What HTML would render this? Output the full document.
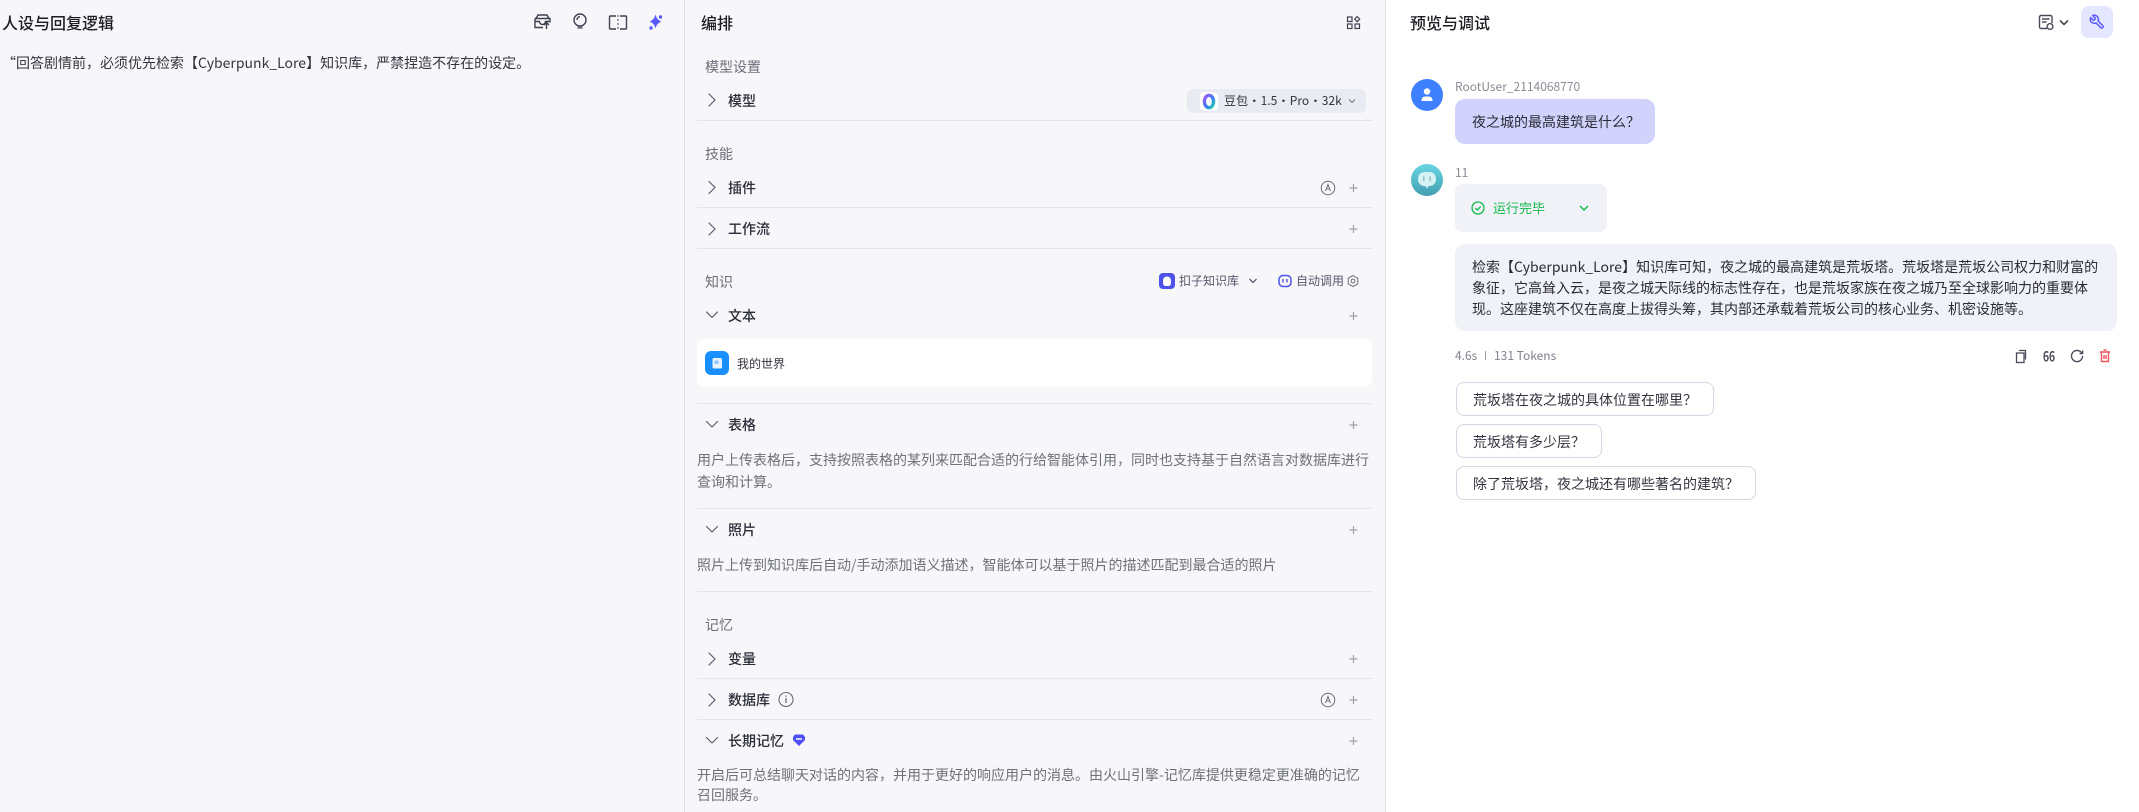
<!DOCTYPE html>
<html lang="zh-CN">
<head>
<meta charset="utf-8">
<title>编排</title>
<style>
html,body{margin:0;padding:0;width:2139px;height:812px;overflow:hidden;background:#fff}
body{position:relative;font-family:"Noto Sans CJK SC","Liberation Sans",sans-serif;font-size:14px;color:#1d1e2c}
.p{position:absolute}
.t{position:absolute;white-space:nowrap;line-height:20px}
.h{font-size:16px;font-weight:500;color:#1c1d23}
.l{color:#6c6d78;left:705px}
.r{left:728px;font-weight:500;color:#2a2b36}
.d{color:#6f7079;left:697px}
.s{font-size:12px}
.hr{position:absolute;left:697px;width:675px;height:1px;background:#e4e5ee}
.sg{position:absolute;left:1456px;height:32px;border:1px solid #d6d7e4;border-radius:8px;background:#fff;box-sizing:content-box;line-height:34px;padding:0 16px;white-space:nowrap;color:#33343f}
svg.o{position:absolute;left:0;top:0;pointer-events:none}
</style>
</head>
<body>
<div class="p" style="left:0;top:0;width:684px;height:812px;background:#f7f7fa"></div>
<div class="p" style="left:684px;top:0;width:1px;height:812px;background:#dfe0e7"></div>
<div class="p" style="left:685px;top:0;width:700px;height:812px;background:#f7f7fa"></div>
<div class="p" style="left:1385px;top:0;width:1px;height:812px;background:#dfe0e7"></div>

<div class="t h" style="left:2px;top:12px">人设与回复逻辑</div>
<div class="t" style="left:2px;top:53px;color:#33343f">“回答剧情前&#xFF0C;必须优先检索【Cyberpunk_Lore】知识库&#xFF0C;严禁捏造不存在的设定。</div>

<div class="t h" style="left:701px;top:12px">编排</div>
<div class="t l" style="top:57px">模型设置</div>
<div class="t r" style="top:91px">模型</div>
<div class="p" style="left:1187px;top:89px;width:179px;height:24px;background:#e9ebf2;border-radius:6px"></div>
<div class="t s" style="left:1224px;top:91px;color:#33343f;word-spacing:-2.4px">豆包 • 1.5 • Pro • 32k</div>
<div class="hr" style="top:120px"></div>

<div class="t l" style="top:144px">技能</div>
<div class="t r" style="top:178px">插件</div>
<div class="hr" style="top:207px"></div>
<div class="t r" style="top:219px">工作流</div>
<div class="hr" style="top:248px"></div>

<div class="t l" style="top:272px">知识</div>
<div class="t s" style="left:1179px;top:271px;color:#55566a">扣子知识库</div>
<div class="t s" style="left:1296px;top:271px;color:#55566a">自动调用</div>
<div class="t r" style="top:306px">文本</div>
<div class="p" style="left:697px;top:339px;width:675px;height:48px;background:#fff;border-radius:8px"></div>
<div class="t s" style="left:737px;top:354px;color:#33343f">我的世界</div>
<div class="hr" style="top:403px"></div>
<div class="t r" style="top:415px">表格</div>
<div class="t d" style="top:450px">用户上传表格后&#xFF0C;支持按照表格的某列来匹配合适的行给智能体引用&#xFF0C;同时也支持基于自然语言对数据库进行</div>
<div class="t d" style="top:472px">查询和计算。</div>
<div class="hr" style="top:508px"></div>
<div class="t r" style="top:520px">照片</div>
<div class="t d" style="top:555px">照片上传到知识库后自动/手动添加语义描述&#xFF0C;智能体可以基于照片的描述匹配到最合适的照片</div>
<div class="hr" style="top:591px"></div>

<div class="t l" style="top:615px">记忆</div>
<div class="t r" style="top:649px">变量</div>
<div class="hr" style="top:678px"></div>
<div class="t r" style="top:690px">数据库</div>
<div class="hr" style="top:719px"></div>
<div class="t r" style="top:731px">长期记忆</div>
<div class="t d" style="top:765px">开启后可总结聊天对话的内容&#xFF0C;并用于更好的响应用户的消息。由火山引擎-记忆库提供更稳定更准确的记忆</div>
<div class="t d" style="top:785px">召回服务。</div>

<div class="t h" style="left:1410px;top:12px">预览与调试</div>
<div class="p" style="left:2081px;top:6px;width:32px;height:32px;background:#e5e6ff;border-radius:8px"></div>

<div class="t s" style="left:1455px;top:77px;color:#8a8b96">RootUser_2114068770</div>
<div class="p" style="left:1455px;top:99px;width:200px;height:45px;background:#d2d3fd;border-radius:10px"></div>
<div class="t" style="left:1472px;top:112px;color:#2a2b36">夜之城的最高建筑是什么&#xFF1F;</div>

<div class="t s" style="left:1455px;top:163px;color:#8a8b96">11</div>
<div class="p" style="left:1455px;top:184px;width:152px;height:48px;background:#f1f2f7;border-radius:8px"></div>
<div class="t" style="left:1493px;top:198px;font-size:13px;color:#12b84a">运行完毕</div>

<div class="p" style="left:1455px;top:244px;width:662px;height:87px;background:#f1f2f7;border-radius:10px"></div>
<div class="t" style="left:1472px;top:257px;color:#2a2b36">检索【Cyberpunk_Lore】知识库可知&#xFF0C;夜之城的最高建筑是荒坂塔。荒坂塔是荒坂公司权力和财富的</div>
<div class="t" style="left:1472px;top:278px;color:#2a2b36">象征&#xFF0C;它高耸入云&#xFF0C;是夜之城天际线的标志性存在&#xFF0C;也是荒坂家族在夜之城乃至全球影响力的重要体</div>
<div class="t" style="left:1472px;top:299px;color:#2a2b36">现。这座建筑不仅在高度上拔得头筹&#xFF0C;其内部还承载着荒坂公司的核心业务、机密设施等。</div>

<div class="t s" style="left:1455px;top:346px;color:#80818c">4.6s</div>
<div class="p" style="left:1485px;top:351px;width:1px;height:9px;background:#9a9ba5"></div>
<div class="t s" style="left:1494px;top:346px;color:#80818c">131 Tokens</div>

<div class="sg" style="top:382px">荒坂塔在夜之城的具体位置在哪里&#xFF1F;</div>
<div class="sg" style="top:424px">荒坂塔有多少层&#xFF1F;</div>
<div class="sg" style="top:466px">除了荒坂塔&#xFF0C;夜之城还有哪些著名的建筑&#xFF1F;</div>

<svg class="o" width="2139" height="812" viewBox="0 0 2139 812" fill="none">
<defs>
<linearGradient id="g1" x1="0" y1="0" x2="0" y2="1"><stop offset="0" stop-color="#68d5e4"/><stop offset="1" stop-color="#429fb0"/></linearGradient>
<linearGradient id="g2" x1="0" y1="0" x2="1" y2="1"><stop offset="0" stop-color="#a45cf0"/><stop offset=".55" stop-color="#3c7bf6"/><stop offset="1" stop-color="#1fd0a8"/></linearGradient>
</defs>
<!-- left header icons -->
<g stroke="#3f4050" stroke-width="1.4">
<path d="M536 18.500l2-3.500h9l2 3.500M535 18.500h15v4M535 18.500v9h8M535 21.500h4.500a3 3 0 0 0 6 0h4"/>
<path d="M546.500 29v-6M544 25l2.500-2.500 2.500 2.500"/>
<circle cx="580" cy="20" r="6"/><path d="M577 20a3.500 3.500 0 0 1 3-3.500"/>
<path d="M577.500 27.500h5" stroke-width="2.400" stroke="#6d6e7a"/>
<path d="M616 16h-5.500a1 1 0 0 0-1 1v11a1 1 0 0 0 1 1h5.500M620 16h5.500a1 1 0 0 1 1 1v11a1 1 0 0 1-1 1h-5.500"/>
<path d="M618 15v15" stroke-dasharray="2 2" stroke="#7a7b87"/>
</g>
<g fill="#5a5aff">
<path d="M655 17c1 4 3 6 6 7-3 1-5 3-6 7-1-4-3-6-6-7 3-1 5-3 6-7z" transform="translate(.5 -2.500)"/>
<circle cx="660.500" cy="17" r="1.700"/><circle cx="651" cy="28" r="1.700"/>
</g>
<!-- middle header icon -->
<g stroke="#3f4050" stroke-width="1.200">
<rect x="1347.500" y="17" width="4.500" height="4.500"/><rect x="1347.500" y="24" width="4.500" height="4.500"/><rect x="1355" y="24" width="4.500" height="4.500"/>
<path d="M1357.200 16.500l2.500 2.600-2.500 2.600-2.500-2.600z"/>
</g>
<!-- chevrons -->
<g stroke="#5a5b6c" stroke-width="1.200" stroke-linecap="round" stroke-linejoin="round">
<path d="M709 94l6 6-6 6M709 181.500l6 6-6 6M709 223l6 6-6 6M709 653l6 6-6 6M709 694l6 6-6 6"/>
<path d="M706.500 312l5.500 5.500 5.500-5.500M706.500 421.500l5.500 5.500 5.500-5.500M706.500 526.500l5.500 5.500 5.500-5.500M706.500 737.500l5.500 5.500 5.500-5.500"/>
</g>
<!-- plus -->
<g stroke="#a0a1ab" stroke-width="1.200">
<path d="M1349.500 188h8M1353.500 184v8M1349.500 229h8M1353.500 225v8M1349.500 316h8M1353.500 312v8M1349.500 425h8M1353.500 421v8M1349.500 530h8M1353.500 526v8M1349.500 659h8M1353.500 655v8M1349.500 700h8M1353.500 696v8M1349.500 741h8M1353.500 737v8"/>
</g>
<!-- A icons -->
<g stroke="#6b6c78" stroke-width="1">
<circle cx="1328" cy="188" r="6.800"/><circle cx="1328" cy="700" r="6.800"/>
<path d="M1325.600 191l2.400-6.500 2.400 6.500M1326.400 189h3.200M1325.600 703l2.400-6.500 2.400 6.500M1326.400 701h3.200"/>
</g>
<!-- info -->
<circle cx="786" cy="699.500" r="7" stroke="#6b6c78" stroke-width="1.100"/>
<path d="M786 698v5M786 695.500v1.300" stroke="#6b6c78" stroke-width="1.300"/>
<!-- diamond -->
<path d="M795 734.500h8l2 2.500v3l-6 6-6-6v-3z" fill="#4f50f5"/>
<path d="M796 739h6" stroke="#fff" stroke-width="1.500"/>
<!-- model chip -->
<rect x="1199.500" y="92" width="19" height="19" rx="4" fill="#fff" stroke="#e0e1ea" stroke-width=".5"/>
<ellipse cx="1209" cy="101.500" rx="4.600" ry="6.200" stroke="url(#g2)" stroke-width="3.400"/>
<path d="M1349 99.500l3 3 3-3" stroke="#7a7b87" stroke-width="1.100"/>
<!-- kb icons -->
<rect x="1159" y="273" width="16" height="16" rx="4" fill="#4d53e8"/>
<path d="M1167 276.500a4 4 0 0 1 4 4v3.500l-1.500 2h-5l-1.500-2v-3.500a4 4 0 0 1 4-4z" fill="#fff"/>
<path d="M1249.500 279l3.500 3.500 3.500-3.500" stroke="#5a5b6c" stroke-width="1.300"/>
<rect x="1279" y="275.500" width="12" height="11" rx="4" stroke="#4d53e8" stroke-width="1.500"/>
<path d="M1283 279v3.500M1287 279v3.500" stroke="#4d53e8" stroke-width="1.400"/>
<path d="M1353 275.500l4.800 2.800v5.500l-4.800 2.800-4.800-2.800v-5.500z" stroke="#6b6c78" stroke-width="1"/>
<circle cx="1353" cy="281" r="1.900" stroke="#6b6c78" stroke-width="1"/>
<!-- doc card icon -->
<rect x="705" y="351" width="24" height="24" rx="6" fill="#1a8fff"/>
<rect x="712.500" y="358" width="9.500" height="10.500" rx="1.500" fill="#e6f3ff"/>
<path d="M714.500 360.500h4v3.500h-4z" fill="#8fc6ff"/>
<!-- right header -->
<g stroke="#4a4b59" stroke-width="1.400">
<path d="M2047 28.500h-6a1.500 1.500 0 0 1-1.500-1.500v-10a1.500 1.500 0 0 1 1.500-1.500h9.500a1.500 1.500 0 0 1 1.500 1.500v6"/>
<path d="M2042 19h7.500M2042 22h4.500"/>
<circle cx="2050" cy="26.500" r="2.900"/>
</g>
<path d="M2060 20.500l4 4 4-4" stroke="#33343f" stroke-width="1.500"/>
<g transform="translate(2105.200 13.800) scale(-.68 .68)">
<path d="M14.700 6.300a1 1 0 0 0 0 1.400l1.600 1.600a1 1 0 0 0 1.400 0l3.770-3.770a6 6 0 0 1-7.940 7.940l-6.910 6.910a2.120 2.120 0 0 1-3-3l6.910-6.910a6 6 0 0 1 7.940-7.940l-3.760 3.760z" stroke="#5a5aff" stroke-width="2.200" stroke-linejoin="round"/>
</g>
<!-- avatars -->
<circle cx="1427" cy="95" r="16" fill="#3f80ff"/>
<circle cx="1427" cy="91.500" r="3.200" fill="#fff"/>
<path d="M1421.500 101v-1.500a4 4 0 0 1 4-3h3a4 4 0 0 1 4 3v1.500z" fill="#fff"/>
<circle cx="1427" cy="180" r="16" fill="url(#g1)"/>
<rect x="1418" y="172" width="18" height="14" rx="6.500" fill="#d5f2f5"/>
<path d="M1425 185.500l2 3 2-3z" fill="#d5f2f5"/>
<path d="M1423.800 177v3.500M1430.200 177v3.500" stroke="#8fbcc6" stroke-width="1.500" stroke-linecap="round"/>
<!-- run status -->
<circle cx="1478" cy="208" r="6" stroke="#12b84a" stroke-width="1.300"/>
<path d="M1475.300 208l2 2 3.400-3.400" stroke="#12b84a" stroke-width="1.300"/>
<path d="M1580 206l4 4 4-4" stroke="#12b84a" stroke-width="1.400"/>
<!-- action icons -->
<g stroke="#4a4b59" stroke-width="1.300">
<rect x="2016.500" y="353" width="7.500" height="9.500"/>
<path d="M2019 350.500h6.500v9"/>
</g>
<g transform="translate(2069.600 348.600) scale(.62)" stroke="#4a4b59" stroke-width="2.100">
<path d="M21 12a9 9 0 1 1-9-9c2.520 0 4.930 1 6.740 2.740L21 8"/>
<path d="M21 3v5h-5"/>
</g>
<text x="2043" y="361.500" font-family="Noto Sans CJK SC, sans-serif" font-size="14" font-weight="500" textLength="12" lengthAdjust="spacingAndGlyphs" fill="#4a4b59" stroke="#4a4b59" stroke-width=".3">66</text>
<g stroke="#f0525f" stroke-width="1.400">
<path d="M2100 352h10M2101.500 352v9.500h7V352"/>
<path d="M2103.500 350h3M2104 355v4M2106 355v4"/>
</g>
</svg>
</body>
</html>
